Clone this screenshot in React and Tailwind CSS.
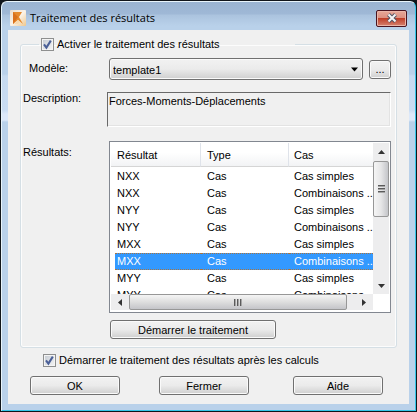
import React, { useState } from 'react';

const results = [
  { result: 'NXX', type: 'Cas', load: 'Cas simples' },
  { result: 'NXX', type: 'Cas', load: 'Combinaisons ..' },
  { result: 'NYY', type: 'Cas', load: 'Cas simples' },
  { result: 'NYY', type: 'Cas', load: 'Combinaisons ..' },
  { result: 'MXX', type: 'Cas', load: 'Cas simples' },
  { result: 'MXX', type: 'Cas', load: 'Combinaisons ..' },
  { result: 'MYY', type: 'Cas', load: 'Cas simples' },
  { result: 'MYY', type: 'Cas', load: 'Combinaisons ..' },
];

const Checkbox = ({ id, label, checked, onChange }) => (
  <div className="flex items-center gap-[3px]">
    <span className="relative flex">
      <input
        id={id}
        type="checkbox"
        checked={checked}
        onChange={(e) => onChange(e.target.checked)}
        className="size-[13px] appearance-none border border-[#8e8f8f] bg-linear-to-br from-[#c4cad2] to-[#f6f6f6] outline-1 -outline-offset-2 outline-[#f4f4f4]"
      />
      {checked && (
        <svg className="pointer-events-none absolute inset-0" width="13" height="13" viewBox="0 0 13 13">
          <path d="M3 6.3 5.4 9.6 9.8 2.6" fill="none" stroke="#4a5f97" strokeWidth="2" />
        </svg>
      )}
    </span>
    <label htmlFor={id} className="whitespace-nowrap">{label}</label>
  </div>
);

const Button = ({ className, children, ...props }) => (
  <button
    type="button"
    className={`rounded-[3px] border border-[#707070] bg-linear-to-b from-[#f2f2f2] from-0% via-[#ebebeb] via-50% to-[#cfcfcf] text-center shadow-[inset_0_0_0_1px_#fafafa] ${className}`}
    {...props}
  >
    {children}
  </button>
);

const VerticalScrollbar = () => (
  <div className="flex w-4 shrink-0 flex-col bg-[#ededee]">
    <button type="button" aria-label="Haut" className="flex h-[18px] items-center justify-center">
      <svg width="7" height="4" viewBox="0 0 7 4"><path d="M0 4 3.5 0 7 4Z" fill="#333" /></svg>
    </button>
    <div className="flex h-[56px] flex-col items-center justify-center gap-px rounded-[2px] border border-[#979797] bg-linear-to-r from-[#f5f5f5] via-[#e6e6e7] to-[#c4c5c9]">
      <span className="h-[2px] w-[7px] border-t border-[#5b5b5b] bg-[#a5a5a5]" />
      <span className="h-[2px] w-[7px] border-t border-[#5b5b5b] bg-[#a5a5a5]" />
      <span className="h-[2px] w-[7px] border-t border-[#5b5b5b] bg-[#a5a5a5]" />
    </div>
    <button type="button" aria-label="Bas" className="mt-auto flex h-4 items-center justify-center">
      <svg width="7" height="4" viewBox="0 0 7 4"><path d="M0 0 3.5 4 7 0Z" fill="#333" /></svg>
    </button>
  </div>
);

const HorizontalScrollbar = () => (
  <div className="mr-4 flex h-4 bg-[#ededee]">
    <button type="button" aria-label="Gauche" className="flex w-[18px] items-center justify-center">
      <svg width="4" height="7" viewBox="0 0 4 7"><path d="M4 0 0 3.5 4 7Z" fill="#333" /></svg>
    </button>
    <div className="mr-2 flex grow items-center justify-center gap-px rounded-[2px] border border-[#979797] bg-linear-to-b from-[#f5f5f5] via-[#dedede] to-[#c4c5c9]">
      <span className="h-[7px] w-[2px] border-l border-[#5b5b5b] bg-[#a5a5a5]" />
      <span className="h-[7px] w-[2px] border-l border-[#5b5b5b] bg-[#a5a5a5]" />
      <span className="h-[7px] w-[2px] border-l border-[#5b5b5b] bg-[#a5a5a5]" />
    </div>
    <button type="button" aria-label="Droite" className="flex w-[18px] items-center justify-center">
      <svg width="4" height="7" viewBox="0 0 4 7"><path d="M0 0 4 3.5 0 7Z" fill="#333" /></svg>
    </button>
  </div>
);

const ResultsTable = () => {
  const [selected, setSelected] = useState(5);

  return (
    <div className="ml-[2px] border border-[#828790] bg-white p-px pb-[2px]">
      <div className="flex h-[151px]">
        <div className="min-w-0 grow overflow-hidden">
          <table className="w-full table-fixed border-separate border-spacing-0 text-left">
            <colgroup>
              <col className="w-[4px]" />
              <col className="w-[86px]" />
              <col className="w-[88px]" />
              <col />
            </colgroup>
            <thead>
              <tr className="h-[24px] bg-linear-to-b from-white from-40% to-[#f1f2f4]">
                <td className="border-b border-[#d5d5d5] p-0" />
                <th className="border-r border-b border-[#dfe3ea] border-b-[#d5d5d5] px-[2px] py-0 font-normal">Résultat</th>
                <th className="border-r border-b border-[#dfe3ea] border-b-[#d5d5d5] px-[6px] py-0 font-normal">Type</th>
                <th className="border-b border-[#d5d5d5] px-[5px] py-0 font-normal">Cas</th>
              </tr>
            </thead>
            <tbody>
              <tr className="h-px"><td className="p-0" /></tr>
              {results.map((row, i) => {
                const cell = i === selected
                  ? 'border-y border-dotted border-[#a87440] bg-[#3399ff] text-white'
                  : 'border-y border-transparent';
                return (
                  <tr key={i} className="h-[17px] leading-[15px] whitespace-nowrap" onClick={() => setSelected(i)}>
                    <td className="p-0" />
                    <td className={`px-[2px] py-0 ${cell}`}>{row.result}</td>
                    <td className={`px-[6px] py-0 ${cell}`}>{row.type}</td>
                    <td className={`py-0 pr-0 pl-[5px] ${cell}`}>{row.load}</td>
                  </tr>
                );
              })}
            </tbody>
          </table>
        </div>
        <VerticalScrollbar />
      </div>
      <HorizontalScrollbar />
    </div>
  );
};

const TitleBar = () => (
  <header className="flex h-[28px] items-center pt-[4px] pr-[2px] pl-[2px]">
    <svg width="16" height="16" viewBox="0 0 16 16">
      <defs>
        <linearGradient id="logo" x1="0" y1="0" x2="1" y2="1">
          <stop offset="0" stopColor="#e9dccd" />
          <stop offset="0.5" stopColor="#fbf3e8" />
          <stop offset="1" stopColor="#efc78c" />
        </linearGradient>
      </defs>
      <rect width="16" height="16" rx="1" fill="url(#logo)" />
      <path d="M3 2H12L9 7 13 14 8 10 3 14Z" fill="#e58a2e" />
      <path d="M3 2 8 7 3 14Z" fill="#d9701c" />
      <path d="M4 14 8 10 10 12 8 14Z" fill="#f9d9ae" />
    </svg>
    <h1 className="ml-1 grow font-['Open_Sans',sans-serif] text-[11px] leading-4">Traitement des résultats</h1>
    <button
      type="button"
      aria-label="Fermer la fenêtre"
      className="flex h-[17px] w-[31px] items-center justify-center rounded-[2px] border border-[#4a1420] bg-[linear-gradient(#e7a898,#dc8f80_48%,#bf3f28_50%,#d68270)] shadow-[inset_0_0_0_1px_#eab5a8]"
    >
      <svg width="12" height="10" viewBox="0 0 12 10">
        <path d="M2.5 1.5 9.5 8.5M9.5 1.5 2.5 8.5" stroke="#535666" strokeWidth="4" />
        <path d="M2.5 1.5 9.5 8.5M9.5 1.5 2.5 8.5" stroke="#f5f5f5" strokeWidth="2" />
      </svg>
    </button>
  </header>
);

export default function App() {
  const [enabled, setEnabled] = useState(true);
  const [autoStart, setAutoStart] = useState(true);
  const [template, setTemplate] = useState('template1');

  return (
    <div className="bg-[#10151b] p-px font-['Liberation_Sans',Arial,sans-serif] text-[11px] leading-[14px] text-black">
      <div className="rounded-t-[6px] border border-[#e8f4fb] border-r-[#35c5e8] border-b-[#35c5e8] bg-[linear-gradient(#9ab4d2_0px,#9fb8d6_12px,#abc3de_13px,#b9d1ea_24px,#b9d1ea_72px,#c6daf0_74px,#c9dcf2_108px,#dce8f9_112px,#dce8f9_118px,#b9d1ea_120px)] px-[6px] pb-[6px]">
        <TitleBar />
        <main className="bg-[#f0f0f0] px-3 pt-[7px] pb-[9px]">
          <fieldset className="rounded-[3px] border border-[#d5dfe5] pr-[5px] pb-2 pl-[2px] shadow-[inset_0_0_0_1px_#fcfcfc]">
            <legend className="ml-4 w-[256px] pl-[2px]">
              <Checkbox id="enabled" label="Activer le traitement des résultats" checked={enabled} onChange={setEnabled} />
            </legend>
            <div className="grid grid-cols-[84px_minmax(0,1fr)]">
              <label htmlFor="template" className="pt-[10px] pl-[6px]">Modèle:</label>
              <div className="flex items-center gap-[6px] pt-[7px] pl-[2px]">
                <div className="relative grow">
                  <select
                    id="template"
                    value={template}
                    onChange={(e) => setTemplate(e.target.value)}
                    className="block h-[22px] w-full appearance-none rounded-[3px] border border-[#707070] bg-linear-to-b from-[#f2f2f2] via-[#ebebeb] to-[#cfcfcf] px-[3px] pt-px pb-0 text-[11px] shadow-[inset_0_0_0_1px_#fafafa]"
                  >
                    <option>template1</option>
                  </select>
                  <svg className="pointer-events-none absolute top-[9px] right-[5px]" width="7" height="5" viewBox="0 0 7 5">
                    <path d="M0 0.5H7L3.5 4.5Z" fill="#000" />
                  </svg>
                </div>
                <Button className="h-[19px] w-[22px]" aria-label="Parcourir">...</Button>
              </div>

              <label htmlFor="description" className="pt-[11px]">Description:</label>
              <textarea
                id="description"
                readOnly
                value="Forces-Moments-Déplacements"
                className="mt-3 block h-[35px] w-full resize-none border border-t-[#696969] border-r-white border-b-white border-l-[#696969] bg-[#f0f0f0] px-px pt-px shadow-[inset_-1px_-1px_0_#e3e3e3] outline-none"
              />

              <span className="pt-[18px]">Résultats:</span>
              <div className="pt-[14px]">
                <ResultsTable />
                <Button className="mt-[7px] ml-[3px] h-[19px] w-[166px]">Démarrer le traitement</Button>
              </div>
            </div>
          </fieldset>
          <div className="mt-[5px] pl-[23px]">
            <Checkbox id="autoStart" label="Démarrer le traitement des résultats après les calculs" checked={autoStart} onChange={setAutoStart} />
          </div>
          <footer className="mt-[9px] flex justify-between pr-[14px] pl-[10px]">
            <Button className="h-[19px] w-[90px]">OK</Button>
            <Button className="mr-[5px] h-[19px] w-[90px]">Fermer</Button>
            <Button className="h-[19px] w-[90px]">Aide</Button>
          </footer>
        </main>
      </div>
    </div>
  );
}
